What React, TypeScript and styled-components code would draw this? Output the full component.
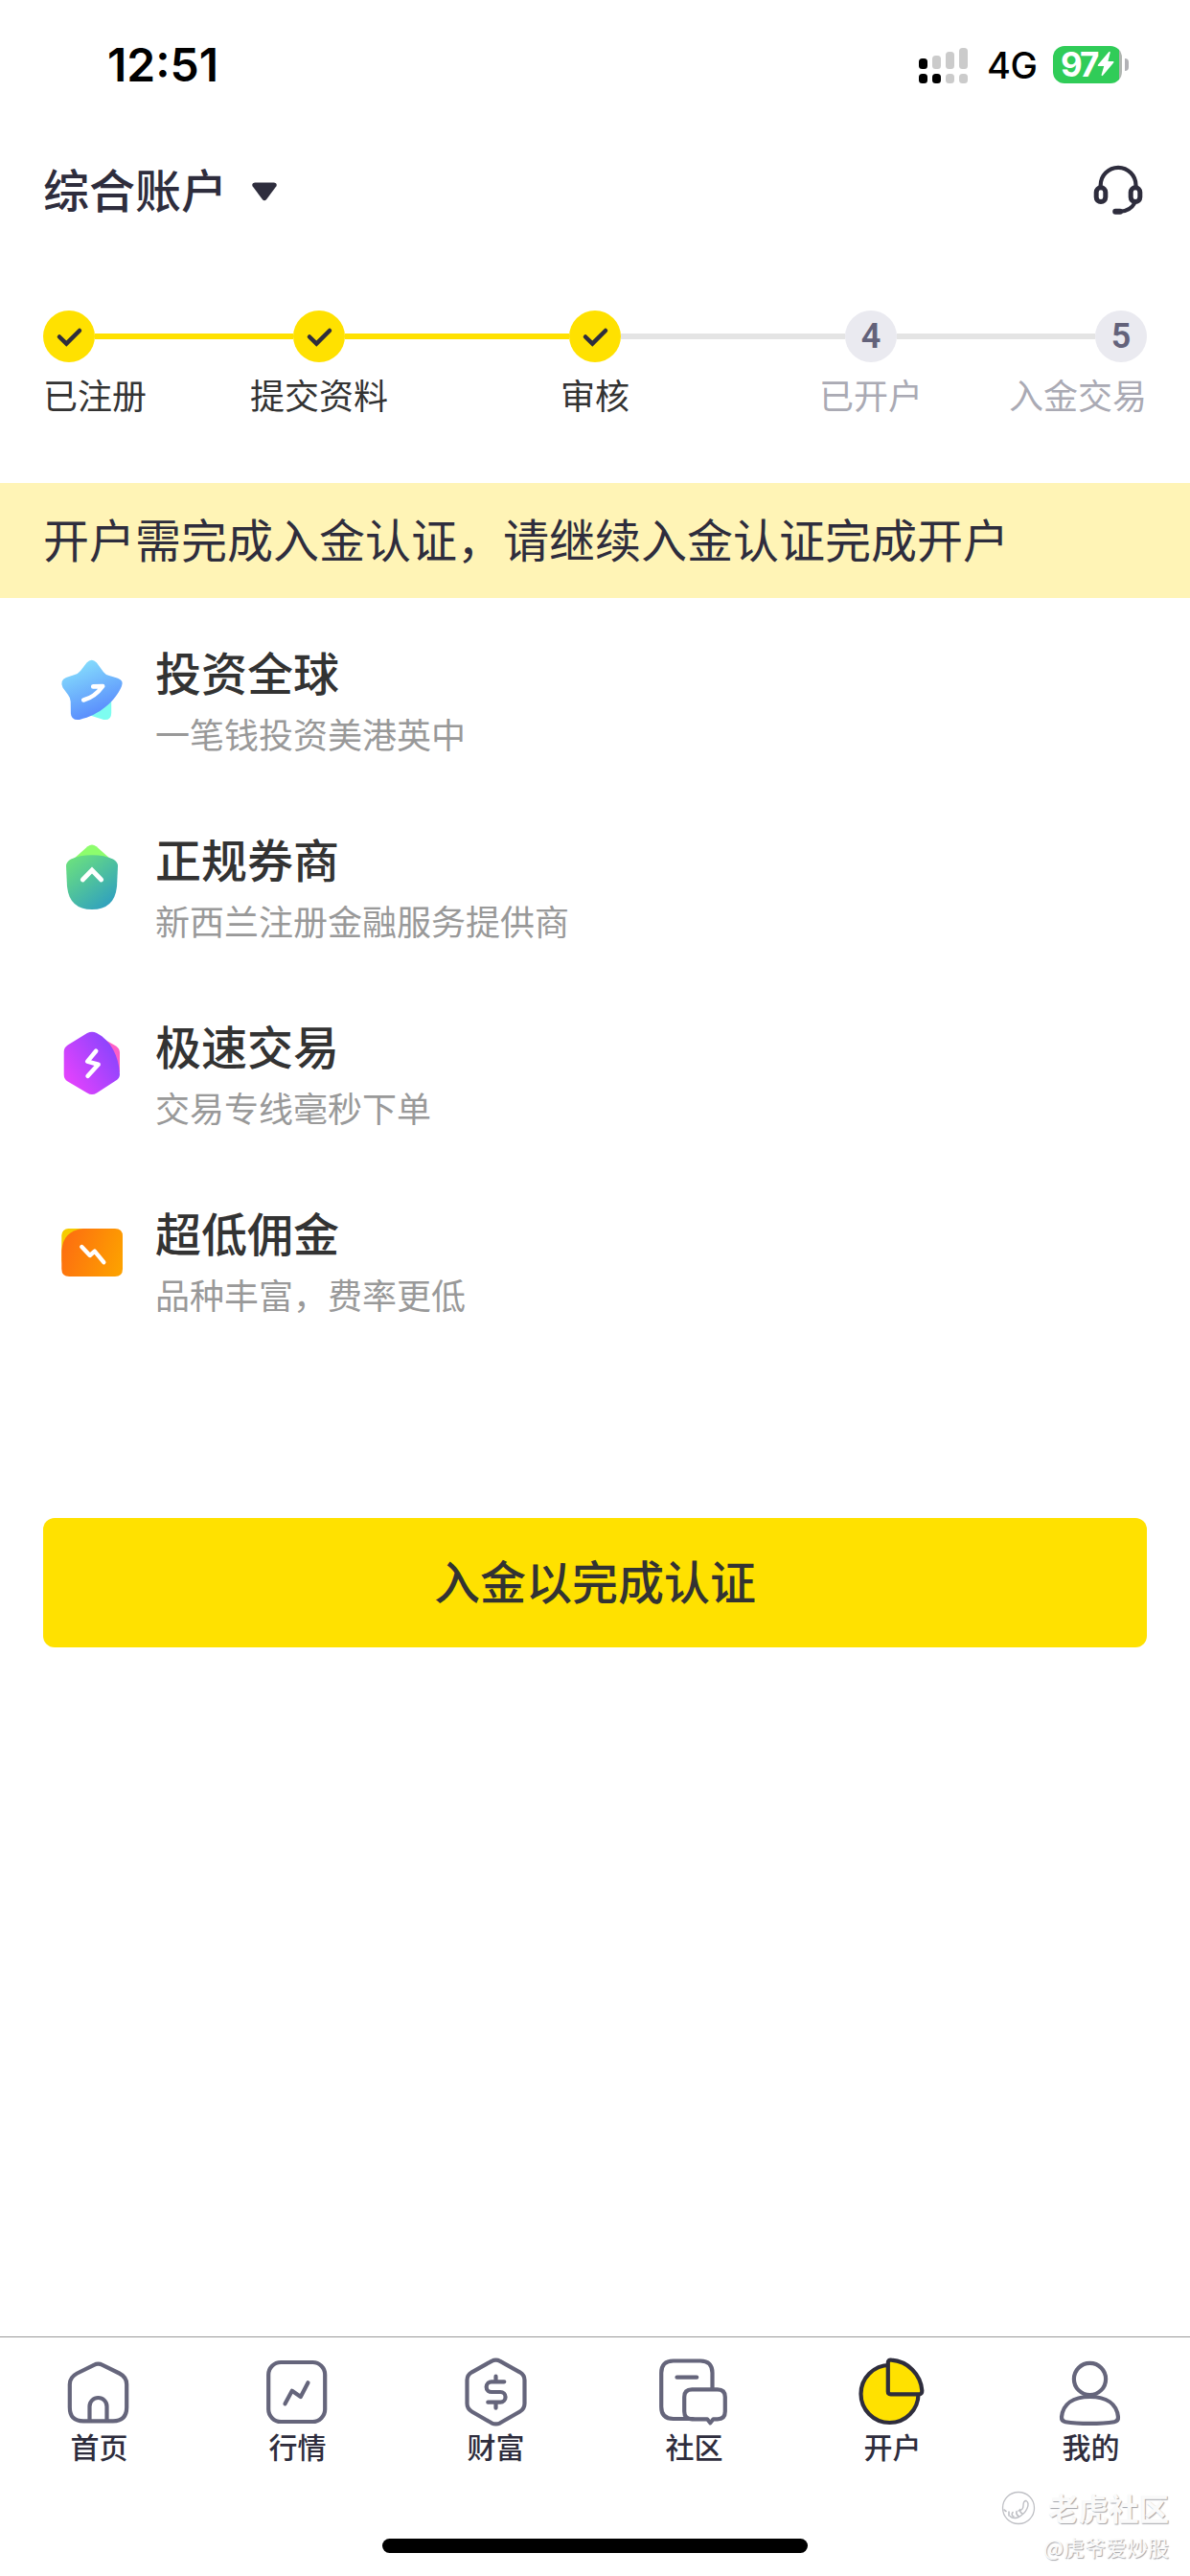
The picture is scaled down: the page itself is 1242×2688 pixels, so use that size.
import styled, { createGlobalStyle } from "styled-components";
import type { JSX } from "react";

function App() {
  return (
    <Screen>
      <GlobalStyle />
      <StatusBar>
        <Clock>12:51</Clock>
        <StatusRight>
          <SignalIcon />
          <Network>4G</Network>
          <Battery>
            <BatteryBody>
              97
              <BoltIcon />
            </BatteryBody>
            <BatteryTip />
          </Battery>
        </StatusRight>
      </StatusBar>

      <Header>
        <Account>
          <AccountName>综合账户</AccountName>
          <CaretIcon />
        </Account>
        <HeadsetIcon />
      </Header>

      <Steps>
        {steps.map((label, i) => (
          <Step
            key={label}
            label={label}
            index={i}
            done={i < DONE_STEPS}
            last={i === steps.length - 1}
          />
        ))}
      </Steps>

      <Notice>开户需完成入金认证，请继续入金认证完成开户</Notice>

      <Features>
        <Feature
          icon={<StarIcon />}
          title="投资全球"
          text="一笔钱投资美港英中"
        />
        <Feature
          icon={<ShieldIcon />}
          title="正规券商"
          text="新西兰注册金融服务提供商"
        />
        <Feature
          icon={<HexagonIcon />}
          title="极速交易"
          text="交易专线毫秒下单"
        />
        <Feature
          icon={<CardIcon />}
          title="超低佣金"
          text="品种丰富，费率更低"
        />
      </Features>

      <DepositButton>入金以完成认证</DepositButton>

      <TabBar>
        <Tab icon={<HomeIcon />} label="首页" />
        <Tab icon={<QuotesIcon />} label="行情" />
        <Tab icon={<WealthIcon />} label="财富" />
        <Tab icon={<CommunityIcon />} label="社区" />
        <Tab icon={<PieIcon />} label="开户" />
        <Tab icon={<UserIcon />} label="我的" />
      </TabBar>
      <HomeArea>
        <HomeIndicator />
      </HomeArea>

      <Watermark>
        <WatermarkRow>
          <TigerIcon />
          <WatermarkName>老虎社区</WatermarkName>
        </WatermarkRow>
        <WatermarkUser>@虎爷爱炒股</WatermarkUser>
      </Watermark>
    </Screen>
  );
}

const steps = ["已注册", "提交资料", "审核", "已开户", "入金交易"];
const DONE_STEPS = 3;

type StepProps = {
  label: string;
  index: number;
  done: boolean;
  last: boolean;
};

function Step({ label, index, done, last }: StepProps): JSX.Element {
  const first = index === 0;
  return (
    <StepStyle $align={first ? "flex-start" : last ? "flex-end" : "center"}>
      <StepTrack>
        {!first && <Line $done={done} />}
        <Dot $done={done}>{done ? <CheckIcon /> : index + 1}</Dot>
        {!last && <Line $done={index < DONE_STEPS - 1} />}
      </StepTrack>
      <StepLabel $done={done}>{label}</StepLabel>
    </StepStyle>
  );
}

type FeatureProps = {
  icon: JSX.Element;
  title: string;
  text: string;
};

function Feature({ icon, title, text }: FeatureProps): JSX.Element {
  return (
    <FeatureStyle>
      {icon}
      <div>
        <FeatureTitle>{title}</FeatureTitle>
        <FeatureText>{text}</FeatureText>
      </div>
    </FeatureStyle>
  );
}

function Tab({ icon, label }: { icon: JSX.Element; label: string }) {
  return (
    <TabStyle>
      {icon}
      <TabLabel>{label}</TabLabel>
    </TabStyle>
  );
}

function SignalIcon() {
  return (
    <svg width="52" height="38" viewBox="0 0 52 38">
      <g fill="#cbcbcb">
        <rect x="14" y="9" width="9" height="14" rx="3.5" />
        <rect x="28" y="5" width="9" height="18" rx="3.5" />
        <rect x="42" y="1" width="9" height="22" rx="3.5" />
        <rect x="28" y="28" width="9" height="10" rx="3.5" />
        <rect x="42" y="28" width="9" height="10" rx="3.5" />
      </g>
      <rect x="0" y="12" width="9" height="11" rx="3.5" />
      <rect x="0" y="28" width="9" height="10" rx="3.5" />
      <rect x="14" y="28" width="9" height="10" rx="3.5" />
    </svg>
  );
}

function BoltIcon() {
  return (
    <svg width="18" height="28" viewBox="0 0 18 28">
      <path
        d="M12.2 1.2L1 14.4q-.9 1.3.6 1.5h5.6L4.6 25q-.2 1.8 1.4.8l11.2-13.2q.9-1.3-.6-1.5h-5.2L13.700 2q.1-1.800-1.500-.8z"
        fill="#fff"
      />
    </svg>
  );
}

function CaretIcon() {
  return (
    <svg width="26" height="20" viewBox="0 0 26 20">
      <path
        d="M3 .5h20q3.8.4 2.4 3.7L15.2 18q-2.2 2.4-4.400 0L.6 4.200Q-.8.9 3 .5z"
        fill="#2e2d3d"
      />
    </svg>
  );
}

function HeadsetIcon() {
  return (
    <svg
      width="54"
      height="54"
      viewBox="0 0 54 54"
      fill="none"
      stroke="#2e2d3d"
      strokeLinecap="round"
    >
      <path d="M8.7 24v-1.700a18.400 18.400 0 0 1 36.800 0V24" strokeWidth="4.2" />
      <rect x="4.2" y="24.8" width="9.6" height="14.8" rx="4.8" strokeWidth="5" />
      <rect x="40.2" y="24.8" width="9.6" height="14.8" rx="4.8" strokeWidth="5" />
      <path d="M44.5 40.5C41.5 46 36 49.4 29 49.7" strokeWidth="4" />
      <path d="M24.2 49.7H29" strokeWidth="6" />
    </svg>
  );
}

function CheckIcon() {
  return (
    <svg width="54" height="54" viewBox="0 0 54 54" fill="none">
      <path
        d="M17 27.5l7.3 7.2L38 21"
        stroke="#2e2d3d"
        strokeWidth="4.5"
        strokeLinecap="round"
      />
    </svg>
  );
}

function StarIcon() {
  return (
    <svg width="72" height="72" viewBox="0 0 72 72" fill="none">
      <defs>
        <linearGradient id="star" x1="18" y1="8" x2="40" y2="62" gradientUnits="userSpaceOnUse">
          <stop stopColor="#86dffc" />
          <stop offset="1" stopColor="#5a8dfd" />
        </linearGradient>
      </defs>
      <path d="M34 62.5L50 45l6.200-2v17q0 8-8 7z" fill="#7dfdf0" />
      <path
        d="M30.5 7.500q5.200-5.600 10.400 0L48 17.300q2 2.700 6 3.800l9 2.600q6.500 2.300 4 8.300C60 48 44 62 23 66.900q-8.700 1.100-9.100-6.400L13.700 48q-.2-4-2.700-7l-5.500-7.500Q2 26 9 23l9-3q3.500-1 6-4z"
        fill="url(#star)"
      />
      <path
        d="M37.2 32.4l10-.4Q39 43.5 27.2 46.5"
        stroke="#fff"
        strokeWidth="4.6"
        strokeLinecap="round"
        strokeLinejoin="round"
      />
    </svg>
  );
}

function ShieldIcon() {
  return (
    <svg width="72" height="72" viewBox="0 0 72 72" fill="none">
      <defs>
        <linearGradient id="shield" x1="16" y1="16" x2="56" y2="66" gradientUnits="userSpaceOnUse">
          <stop stopColor="#6adf80" />
          <stop offset="1" stopColor="#2f9fc0" />
        </linearGradient>
      </defs>
      <path d="M16 18L31.5 4.300q4.500-3.800 9 0L56 18z" fill="#8dfd6d" />
      <path
        d="M36 13.3c9 0 16 1.5 22 4.200q5 2.500 5 7.500l-1 21Q59.500 70 36 70T10 46L9 25q0-5 5-7.500c6-2.700 13-4.200 22-4.200z"
        fill="url(#shield)"
      />
      <path d="M26.3 39L36 29l9.700 10" stroke="#fff" strokeWidth="4.8" strokeLinecap="round" />
    </svg>
  );
}

function HexagonIcon() {
  return (
    <svg width="72" height="72" viewBox="0 0 72 72" fill="none">
      <defs>
        <linearGradient id="hexagon" x1="12" y1="54" x2="60" y2="24" gradientUnits="userSpaceOnUse">
          <stop stopColor="#e142fd" />
          <stop offset="1" stopColor="#8e44fd" />
        </linearGradient>
      </defs>
      <path d="M36 3l25 14.500q4 2.500 4 7V45L50 40z" fill="#fd5fc6" />
      <path
        d="M31 4q5-2.700 10 0C56 12 64 28 65 47q0 4-4 6.500L41 66.500q-5 3.200-10 0l-20.300-12q-4-2.500-4-7v-24q0-4.500 4-7z"
        fill="url(#hexagon)"
      />
      <path
        d="M40.2 22.8l-9 10.800 11.400 3.200-11 12"
        stroke="#fff"
        strokeWidth="4.6"
        strokeLinecap="round"
        strokeLinejoin="round"
      />
    </svg>
  );
}

function CardIcon() {
  return (
    <svg width="72" height="72" viewBox="0 0 72 72" fill="none">
      <defs>
        <linearGradient id="card" x1="6" y1="30" x2="66" y2="50" gradientUnits="userSpaceOnUse">
          <stop stopColor="#fd6f10" />
          <stop offset="1" stopColor="#fda000" />
        </linearGradient>
      </defs>
      <rect x="4.3" y="13" width="34" height="40" rx="7" fill="#f5cb00" />
      <path
        d="M27 13h33q8 0 8 8v34q0 8-8 8H12.300q-8 0-8-8V36Q6 15 27 13z"
        fill="url(#card)"
      />
      <path
        d="M25.3 32l8.500 9 5-4.300 9.500 11.500"
        stroke="#fff"
        strokeWidth="4.4"
        strokeLinecap="round"
        strokeLinejoin="round"
      />
    </svg>
  );
}

function HomeIcon() {
  return (
    <TabSvg viewBox="0 0 76 76">
      <path d="M32 9.8q4.500-2.200 9 0l17.500 8.700q7.700 4 7.700 11.500v24q0 14.300-14.200 14.300H21Q6.800 68.300 6.800 54V30q0-7.500 7.700-11.500z" />
      <path d="M27.5 68V53a9 9 0 0 1 18 0v15" />
    </TabSvg>
  );
}

function QuotesIcon() {
  return (
    <TabSvg viewBox="0 0 76 76">
      <rect x="7.2" y="7" width="59" height="62" rx="13" />
      <path d="M24.5 50.3l7.300-13.500 9 6.200 7.700-14.700" />
    </TabSvg>
  );
}

function WealthIcon() {
  return (
    <TabSvg viewBox="0 0 76 76">
      <path d="M33 5.8q4.500-2.200 9 0l20.500 11.500q5 3 5 8.200V50q0 5.500-5 8.500L42 70.300q-4.500 2.200-9 0L12.500 58.500q-5-3-5-8.500V25.500q0-5.200 5-8.200z" />
      <path d="M46.3 27.3H33a5.350 5.350 0 0 0 0 10.700h9.200a5.350 5.350 0 0 1 0 10.700H29.300M37.500 21.700v5.600M37.500 48.700v6" />
    </TabSvg>
  );
}

function CommunityIcon() {
  return (
    <TabSvg viewBox="0 0 76 76">
      <path d="M56.5 35V18Q56.500 5.500 44 5.500H15.700Q3.200 5.500 3.200 18v35.500Q3.200 66 15.700 66H36" />
      <path d="M35.2 35.3h26.600q8 0 8 8v15q0 8-8 8h-4.300l-3.200 4-3.200-4H35.200q-8 0-8-8v-15q0-8 8-8z" />
      <path d="M19.5 22.7h20.700" />
    </TabSvg>
  );
}

function PieIcon() {
  return (
    <ActiveTabSvg viewBox="0 0 76 76">
      <circle cx="34.5" cy="40" r="30" />
      <path d="M32.8 7.500q0-3.200 3.500-2.800A34.500 34.500 0 0 1 68.300 36.500q.2 3.800-3.300 3.800H35.500q-2.700 0-2.700-2.700z" />
    </ActiveTabSvg>
  );
}

function UserIcon() {
  return (
    <TabSvg viewBox="0 0 76 76">
      <circle cx="36.5" cy="24.4" r="16.6" />
      <path d="M7 64C8.500 50.500 19 43 36.500 43S64.500 50.500 66 64q.3 4.500-4 5.200c-14 2.300-37 2.300-51 0Q6.700 68.500 7 64z" />
    </TabSvg>
  );
}

function TigerIcon() {
  return (
    <svg width="36" height="36" viewBox="0 0 36 36" fill="none" stroke="#bfc0c5">
      <circle cx="18" cy="18" r="16.5" strokeWidth="1.3" />
      <path
        d="M26 10.500q-3 0-3 5t-5 5.500M26 10.500q3.500 2 1 8T17 28M17 28q-5 1.500-8-1.500"
        strokeWidth="1.4"
        strokeLinecap="round"
      />
      <path
        d="M8 22v4M12 22.500q-2 3 1 4.500M16 21.500q-1 3 2 5M19.500 19.500q0 3 2.500 4.500M3 20l2 1.500"
        strokeWidth="1.6"
        strokeLinecap="round"
      />
    </svg>
  );
}

const GlobalStyle = createGlobalStyle`
  * {
    box-sizing: border-box;
  }

  body {
    margin: 0;
    background: #ffffff;
    font-family: "Noto Sans CJK SC", sans-serif;
  }

  svg {
    display: block;
    flex-shrink: 0;
  }
`;

const Screen = styled.div`
  position: relative;
  display: flex;
  flex-direction: column;
  width: 1242px;
  height: 2688px;
  overflow: hidden;
  background: #ffffff;
  color: #2e2d3d;
`;

const StatusBar = styled.div`
  display: flex;
  justify-content: space-between;
  align-items: center;
  height: 136px;
  padding: 0 64px 0 112px;
  color: #000000;
  font-family: Inter, sans-serif;
`;

const Clock = styled.div`
  font-size: 48px;
  font-weight: 600;
  line-height: 56px;
`;

const StatusRight = styled.div`
  display: flex;
  align-items: center;
`;

const Network = styled.div`
  width: 88px;
  padding-left: 19px;
  font-size: 38px;
  font-weight: 500;
  line-height: 44px;
  letter-spacing: -0.5px;
`;

const Battery = styled.div`
  display: flex;
  align-items: center;
  gap: 3px;
  margin-top: -2px;
`;

const BatteryBody = styled.div`
  display: flex;
  align-items: center;
  width: 72px;
  height: 39px;
  padding-left: 8px;
  border-radius: 12px;
  background: linear-gradient(to right, #30cc58 69px, #b0b6b1 69px);
  color: #ffffff;
  font-size: 35px;
  font-weight: 700;
  letter-spacing: -2px;
`;

const BatteryTip = styled.div`
  width: 4px;
  height: 13px;
  border-radius: 0 4px 4px 0;
  background: #b2b2b6;
`;

const Header = styled.header`
  display: flex;
  justify-content: space-between;
  align-items: center;
  height: 124px;
  padding: 0 48px 0 45px;
`;

const Account = styled.div`
  display: flex;
  align-items: center;
  gap: 26px;
  padding-top: 4px;
`;

const AccountName = styled.div`
  padding-bottom: 9px;
  font-size: 48px;
  font-weight: 500;
  line-height: 72px;
`;

const Steps = styled.div`
  display: grid;
  grid-template-columns: 1fr 2fr 2fr 2fr 1fr;
  height: 244px;
  padding: 64px 45px 0;
`;

const StepStyle = styled.div<{ $align: string }>`
  display: flex;
  flex-direction: column;
  align-items: ${({ $align }) => $align};
  gap: 6px;
  min-width: 0;
`;

const StepTrack = styled.div`
  display: flex;
  align-items: center;
  width: 100%;
`;

const Line = styled.div<{ $done: boolean }>`
  flex: 1;
  height: 6px;
  background: ${({ $done }) => ($done ? "#ffe100" : "#e4e4e4")};
`;

const Dot = styled.div<{ $done: boolean }>`
  display: flex;
  justify-content: center;
  align-items: center;
  width: 54px;
  height: 54px;
  border-radius: 50%;
  background: ${({ $done }) => ($done ? "#ffe100" : "#eaeaf0")};
  color: #63627a;
  font-family: Roboto, sans-serif;
  font-size: 36px;
  font-weight: 600;
`;

const StepLabel = styled.div<{ $done: boolean }>`
  color: ${({ $done }) => ($done ? "#333333" : "#aaaab4")};
  font-size: 36px;
  line-height: 54px;
  white-space: nowrap;
`;

const Notice = styled.div`
  height: 120px;
  padding-left: 45px;
  background: #fff4b6;
  font-size: 48px;
  line-height: 115px;
`;

const Features = styled.div`
  display: flex;
  flex-direction: column;
  gap: 75px;
  padding: 42px 60px 0;
`;

const FeatureStyle = styled.div`
  display: flex;
  gap: 30px;
  height: 120px;

  > svg {
    margin-top: 18px;
  }
`;

const FeatureTitle = styled.div`
  color: #333333;
  font-size: 48px;
  font-weight: 500;
  line-height: 68px;
`;

const FeatureText = styled.div`
  color: #999999;
  font-size: 36px;
  line-height: 62px;
`;

const DepositButton = styled.button`
  height: 135px;
  margin: 213px 45px 0;
  padding: 0 0 8px;
  border: none;
  border-radius: 12px;
  background: #ffe100;
  color: #333333;
  font-family: inherit;
  font-size: 48px;
  font-weight: 500;
`;

const TabBar = styled.nav`
  display: grid;
  grid-template-columns: repeat(6, 1fr);
  height: 160px;
  margin-top: auto;
  padding-top: 19px;
  border-top: 1px solid #999999;
`;

const TabStyle = styled.div`
  display: flex;
  flex-direction: column;
  align-items: center;
`;

const TabSvg = styled.svg`
  width: 76px;
  height: 76px;
  fill: none;
  stroke: #65657b;
  stroke-width: 4.2px;
  stroke-linecap: round;
  stroke-linejoin: round;
`;

const ActiveTabSvg = styled(TabSvg)`
  fill: #ffe100;
  stroke: #2e2d3d;
`;

const TabLabel = styled.div`
  font-size: 30px;
  font-weight: 500;
  line-height: 36px;
`;

const HomeArea = styled.div`
  display: flex;
  justify-content: center;
  height: 90px;
  padding-top: 51px;
`;

const HomeIndicator = styled.div`
  width: 444px;
  height: 15px;
  border-radius: 8px;
  background: #000000;
`;

const Watermark = styled.div`
  position: absolute;
  right: 22px;
  bottom: 13px;
  display: flex;
  flex-direction: column;
  align-items: flex-end;
  color: #fafafa;
  text-shadow: 1px 1px 1px #a2a3a8;
`;

const WatermarkRow = styled.div`
  display: flex;
  align-items: center;
  gap: 13px;
`;

const WatermarkName = styled.div`
  padding-bottom: 2px;
  font-size: 31.5px;
  font-weight: 700;
  line-height: 42px;
`;

const WatermarkUser = styled.div`
  font-size: 22px;
  line-height: 36px;
`;

export default App;
